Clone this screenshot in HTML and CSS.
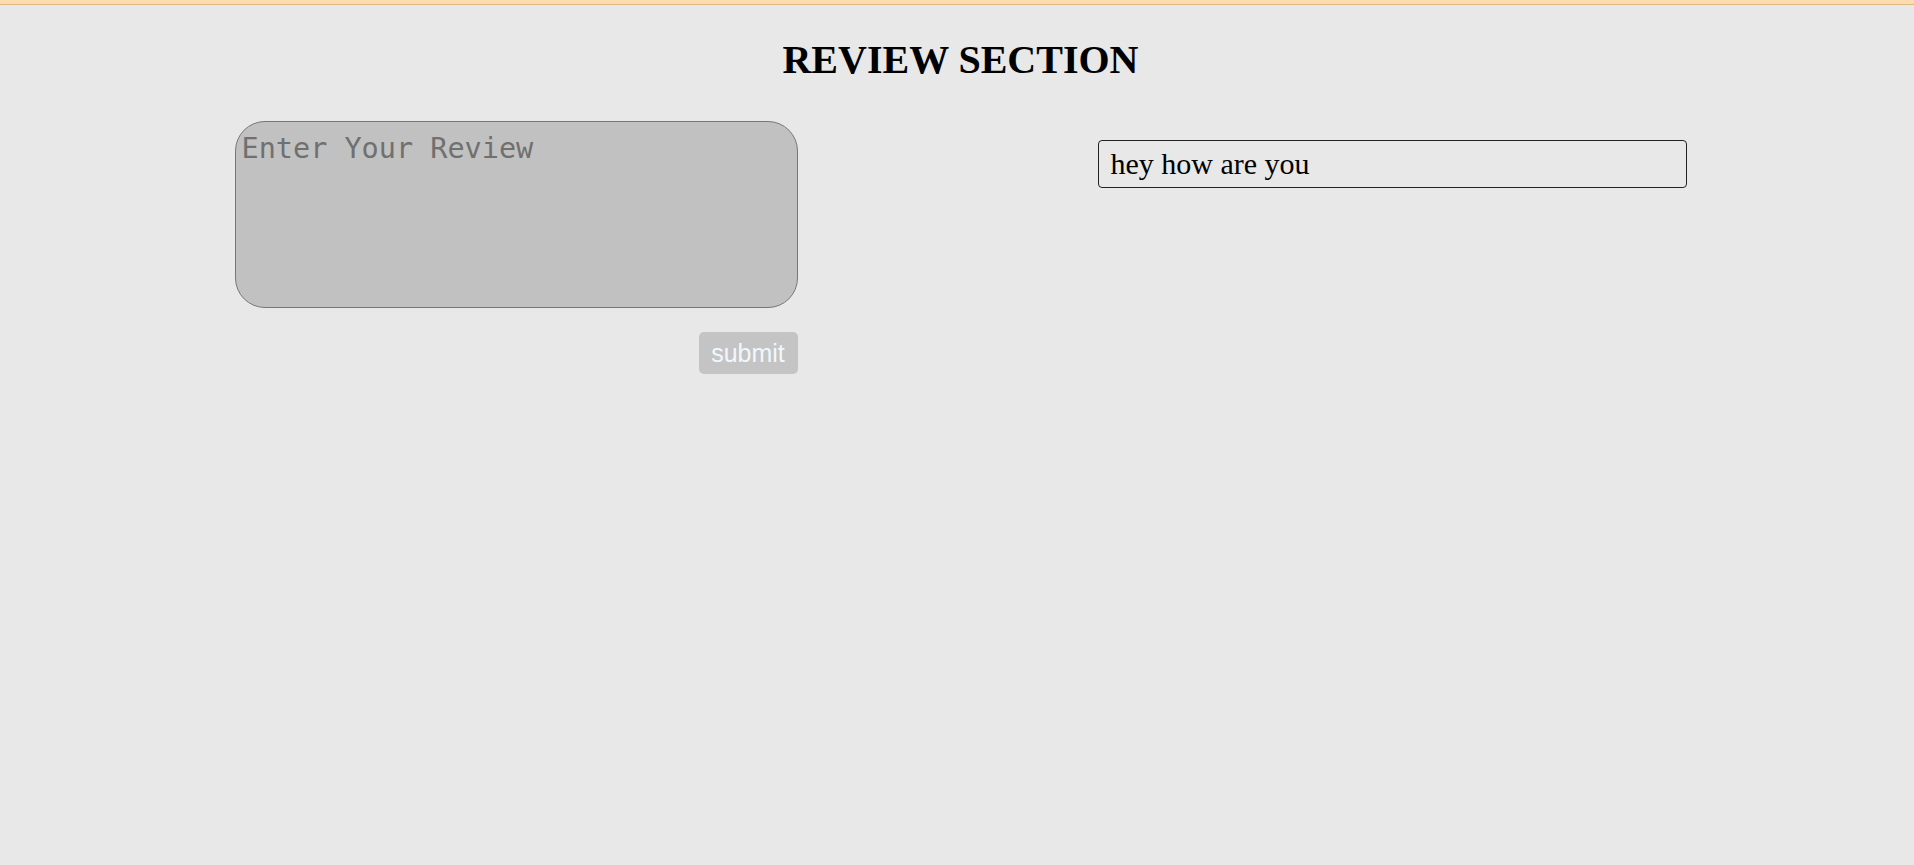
FILE: index.html
```html
<!DOCTYPE html>
<html lang="en">
<head>
<meta charset="utf-8">
<title>Review Section</title>
<link rel="stylesheet" href="styles.css">
</head>
<body>
<div class="topbar"></div>
<div class="page">
  <h1 class="title">REVIEW SECTION</h1>
  <main class="reviews">
    <section class="review-form">
      <textarea class="review-input" placeholder="Enter Your Review"></textarea>
      <div class="actions">
        <button class="submit-btn" type="button">submit</button>
      </div>
    </section>
    <section class="review-list">
      <div class="review-item">hey how are you</div>
    </section>
  </main>
</div>
</body>
</html>
```

FILE: styles.css
```css
html, body {
  margin: 0;
  padding: 0;
  background: #e8e8e8;
  min-height: 100%;
}
body {
  font-family: "Liberation Serif", "Times New Roman", serif;
  color: #000;
}
.topbar {
  height: 4px;
  background: #ffdcb0;
  border-bottom: 1px solid #deb887;
}
.page {
  padding-left: 7px;
}
.title {
  margin: 32px 0 0;
  text-align: center;
  font-size: 40px;
  font-weight: bold;
  line-height: 46px;
}
.reviews {
  width: 1452px;
  margin: 38px auto 0;
  display: flex;
  justify-content: space-between;
  align-items: flex-start;
}
.review-form {
  width: 563px;
  display: flex;
  flex-direction: column;
  gap: 24px;
}
.review-input {
  box-sizing: border-box;
  width: 563px;
  height: 187px;
  margin: 0;
  padding: 10px 6px;
  background: #c1c1c1;
  border: 1px solid #777;
  border-radius: 30px;
  font-family: "DejaVu Sans Mono", monospace;
  font-size: 28.5px;
  resize: none;
  outline: none;
}
.review-input::placeholder {
  color: #707070;
}
.actions {
  display: flex;
  justify-content: flex-end;
}
.submit-btn {
  box-sizing: border-box;
  width: 99px;
  height: 42px;
  padding: 0;
  border: none;
  border-radius: 5px;
  background: #c4c4c4;
  color: #f0f8ff;
  font-family: "Liberation Sans", Arial, sans-serif;
  font-size: 25px;
}
.review-list {
  width: 589px;
  margin-top: 19px;
}
.review-item {
  box-sizing: border-box;
  height: 48px;
  padding: 0 12px;
  border: 1px solid #222;
  border-radius: 4px;
  font-size: 30px;
  line-height: 46px;
}
```
